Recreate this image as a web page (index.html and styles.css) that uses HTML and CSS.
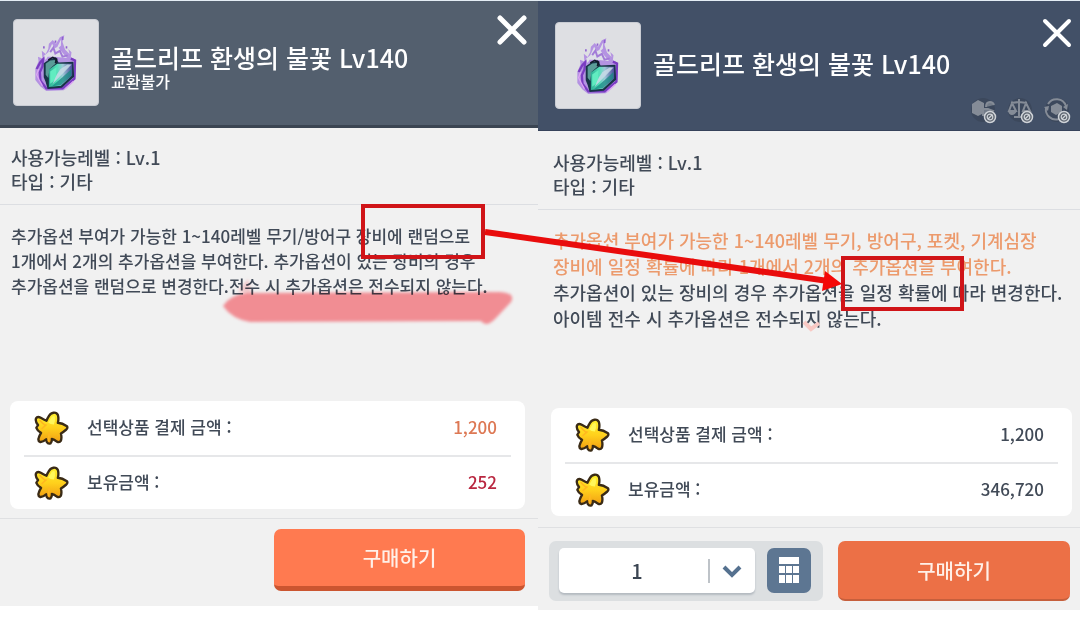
FILE: index.html
```
<!DOCTYPE html>
<html lang="ko">
<head>
  <meta charset="UTF-8" />
  <meta name="viewport" content="width=device-width, initial-scale=1" />
  <title>골드리프 환생의 불꽃 Lv140</title>
  <link rel="stylesheet" href="styles.css">
</head>
<body>

  <!-- 공용 아이콘 -->
  <svg class="sprites" aria-hidden="true">
    <defs>
      <linearGradient id="starFill" x1="0" y1="0" x2="0" y2="1">
        <stop offset="0" stop-color="#fff22e" />
        <stop offset="0.5" stop-color="#ffd01c" />
        <stop offset="1" stop-color="#f09a12" />
      </linearGradient>
      <linearGradient id="gemFill" x1="0" y1="0" x2="1" y2="0">
        <stop offset="0" stop-color="#2fae94" />
        <stop offset="0.35" stop-color="#53dfb8" />
        <stop offset="0.6" stop-color="#9fc9d8" />
        <stop offset="1" stop-color="#4a4b9a" />
      </linearGradient>
      <filter id="soft" x="-10%" y="-40%" width="120%" height="180%">
        <feGaussianBlur stdDeviation="1.6" />
      </filter>
    </defs>
    <symbol id="star" viewBox="0 0 104 104">
      <path d="M45 14C50 4 66 1 71 12Q74 23 71 35Q84 36 98 45Q101 50 96 55Q88 62 80 67Q83 79 80 88Q76 95 68 91Q60 85 53 83Q54 91 49 96Q42 99 38 92L36 84Q27 93 18 92Q11 89 14 80Q16 73 21 65Q10 59 7 50Q9 46 12 42Q3 32 6 22Q10 15 20 20Q30 26 37 29Q40 22 45 14Z" fill="url(#starFill)" stroke="#3a2b16" stroke-width="7" stroke-linejoin="round" />
      <path d="M48 25Q54 12 62 16Q64 30 59 40Q48 40 42 34Z" fill="#fff75a" />
      <path d="M18 28Q28 40 35 42L24 52M45 66L43 88" fill="none" stroke="#ffb820" stroke-width="5" stroke-linecap="round" />
    </symbol>
    <symbol id="flame" viewBox="0 0 260 260">
      <path d="M66 150L76 126L74 112L88 118L86 94L98 104L106 88L108 72L120 60L130 72L134 66L142 52L156 46L150 66L158 90L172 104L168 88L178 98L176 114L188 120L192 140L190 182L172 200L154 216L100 218L82 204L66 184Z" fill="#b493e2" />
      <path d="M106 98L118 72L126 86L134 82L146 58L145 78L138 84L152 102L164 116L124 112L104 112L98 122L92 110Z" fill="#dedfe8" />
      <path d="M112 98L122 84L128 102L142 94L150 112L166 108" fill="none" stroke="#a27bd8" stroke-width="6" />
      <path d="M70 150L82 128L90 120L88 142L80 160L82 186L100 210L150 210L187 180L189 124L176 118" fill="none" stroke="#7a3cc2" stroke-width="7" />
      <path d="M76 150L70 168L78 184L88 202M184 188L158 212" fill="none" stroke="#dda4f4" stroke-width="4" />
      <path d="M92 132L110 120L130 114L138 130L184 128L186 174L148 208L104 212L98 190L92 176Z" fill="#173447" />
      <path d="M98 134L112 124L126 122L130 132L110 150L106 178L98 168Z" fill="#5a9c98" />
      <path d="M108 152L134 134L180 134L180 170L145 202L108 206Z" fill="url(#gemFill)" />
      <path d="M112 158L132 144L130 182L112 196Z" fill="#61ecc0" />
      <path d="M144 150L166 136L178 136L120 196L132 168Z" fill="#c9dbe8" opacity=".85" />
      <path d="M150 176L178 150L178 170L146 200L116 204Z" fill="#178b83" opacity=".75" />
      <path d="M106 122L120 114L132 120L128 132" fill="none" stroke="#111827" stroke-width="5" />
      <path d="M126 62h5v7h-5zM90 80h5v7h-5zM160 80h5v7h-5zM148 50h5v10h-5z" fill="#8e5fd0" />
    </symbol>
    <symbol id="ban" viewBox="0 0 14 14">
      <circle cx="7" cy="7" r="5.5" fill="#59616c" stroke="#cfd3d8" stroke-width="1.5" />
      <circle cx="7" cy="7" r="2.8" fill="none" stroke="#cfd3d8" stroke-width="1.2" />
      <path d="M5 9L9 5" stroke="#cfd3d8" stroke-width="1.3" />
    </symbol>
  </svg>

  <main class="compare">

    <section class="panel before">
      <header class="panel-header">
        <div class="thumb"><svg><use href="#flame" /></svg></div>
        <div class="heading">
          <h2>골드리프 환생의 불꽃 Lv140</h2>
          <p>교환불가</p>
        </div>
        <div class="side">
          <button type="button" class="close" aria-label="닫기">
            <svg viewBox="0 0 30 30"><path d="M3 3L27 27M27 3L3 27" stroke-width="5" /></svg>
          </button>
        </div>
      </header>
      <div class="info">
        <p>사용가능레벨 : Lv.1</p>
        <p>타입 : 기타</p>
      </div>
      <div class="desc">
        <p>추가옵션 부여가 가능한 1~140레벨 무기/방어구 장비에 랜덤으로<br>1개에서 2개의 추가옵션을 부여한다. 추가옵션이 있는 장비의 경우<br>추가옵션을 랜덤으로 변경한다.전수 시 추가옵션은 전수되지 않는다.</p>
      </div>
      <dl class="price">
        <div class="price-row">
          <svg><use href="#star" /></svg>
          <dt>선택상품 결제 금액 :</dt>
          <dd class="orange">1,200</dd>
        </div>
        <div class="price-row">
          <svg><use href="#star" /></svg>
          <dt>보유금액 :</dt>
          <dd class="red">252</dd>
        </div>
      </dl>
      <footer class="actions">
        <button type="button" class="buy">구매하기</button>
      </footer>
    </section>

    <section class="panel after">
      <header class="panel-header">
        <div class="thumb"><svg><use href="#flame" /></svg></div>
        <div class="heading">
          <h2>골드리프 환생의 불꽃 Lv140</h2>
        </div>
        <div class="side">
          <button type="button" class="close" aria-label="닫기">
            <svg viewBox="0 0 30 30"><path d="M3 3L27 27M27 3L3 27" stroke-width="4" /></svg>
          </button>
          <div class="limits">
            <svg viewBox="0 0 28 28" role="img" aria-label="교환 불가">
              <circle cx="13" cy="13" r="12" fill="#3c485c" />
              <path d="M2 7L8 3L14 6V16L8 19L2 16Z" fill="#858c97" />
              <path d="M13 12H18L23 14L20 18H13ZM16 10Q16 5 20 5Q23 5 24 8" fill="#737c89" stroke="#858c97" stroke-width="2" />
              <use href="#ban" x="13" y="13" width="14" height="14" />
            </svg>
            <svg viewBox="0 0 28 28" role="img" aria-label="경매 불가">
              <circle cx="13" cy="13" r="12" fill="#3c485c" />
              <path d="M12 2V19M7 20H16M4 6L12 5L20 6M5 6L2 14H9ZM19 6L16 14H23Z" fill="none" stroke="#858c97" stroke-width="2" />
              <path d="M1 14H10Q8 18 5 18Q2 18 1 14ZM15 14H24Q22 18 19 18Z" fill="#858c97" />
              <use href="#ban" x="13" y="13" width="14" height="14" />
            </svg>
            <svg viewBox="0 0 28 28" role="img" aria-label="이동 불가">
              <circle cx="13" cy="13" r="12" fill="#3c485c" />
              <path d="M4 7A10 10 0 0 1 22 9M2 11A10 10 0 0 0 15 22" fill="none" stroke="#858c97" stroke-width="2" />
              <path d="M0 10L5 9L4 14ZM24 7L23 13L19 10Z" fill="#858c97" />
              <path d="M7 9L13 6L18 9V15L12 18L7 15Z" fill="#858c97" />
              <use href="#ban" x="13" y="13" width="14" height="14" />
            </svg>
          </div>
        </div>
      </header>
      <div class="info">
        <p>사용가능레벨 : Lv.1</p>
        <p>타입 : 기타</p>
      </div>
      <div class="desc">
        <p class="changed">추가옵션 부여가 가능한 1~140레벨 무기, 방어구, 포켓, 기계심장<br>장비에 일정 확률에 따라 1개에서 2개의 추가옵션을 부여한다.</p>
        <p>추가옵션이 있는 장비의 경우 추가옵션을 일정 확률에 따라 변경한다.<br>아이템 전수 시 추가옵션은 전수되지 않는다.</p>
      </div>
      <dl class="price">
        <div class="price-row">
          <svg><use href="#star" /></svg>
          <dt>선택상품 결제 금액 :</dt>
          <dd>1,200</dd>
        </div>
        <div class="price-row">
          <svg><use href="#star" /></svg>
          <dt>보유금액 :</dt>
          <dd>346,720</dd>
        </div>
      </dl>
      <footer class="actions">
        <div class="quantity">
          <div class="select-wrap">
            <select aria-label="수량">
              <option>1</option>
              <option>2</option>
              <option>3</option>
            </select>
            <svg class="arrow" viewBox="0 0 36 24" aria-hidden="true">
              <path d="M1 0V24" stroke="#a9afb6" stroke-width="1.5" />
              <path d="M16 8L24 16L32 8" fill="none" stroke="#55718f" stroke-width="4" />
            </svg>
          </div>
          <button type="button" class="calc" aria-label="계산기">
            <svg viewBox="0 0 20 26">
              <path d="M0 0H20V7H0ZM0 9H6V16H0ZM7 9H13V16H7ZM14 9H20V16H14ZM0 18H6V26H0ZM7 18H13V26H7ZM14 18H20V26H14Z" fill="#fff" />
            </svg>
          </button>
        </div>
        <button type="button" class="buy">구매하기</button>
      </footer>
    </section>

    <!-- 변경점 표시 -->
    <svg class="marks" viewBox="0 0 1080 622" aria-hidden="true">
      <path class="marker" d="M223 306Q230 295 246 293L500 292Q516 293 511 302L495 319Q486 328 481 321L250 322Q232 319 223 306Z" filter="url(#soft)" />
      <path class="marker" d="M238 291L248 279L252 294Z" filter="url(#soft)" opacity=".4" />
      <path d="M804 322L811 329L819 323" fill="none" stroke="#f8c9c4" stroke-width="4" />
      <rect class="box" x="363" y="206" width="120" height="51" />
      <rect class="box" x="843" y="258" width="119" height="51" />
      <path d="M485 232L828 281" stroke="#e90c0c" stroke-width="6" />
      <path d="M825 271L842 284L822 291Z" fill="#f40808" />
    </svg>
  </main>

</body>
</html>
```
FILE: styles.css
```
* {
  box-sizing: border-box;
}
body {
  margin: 0;
  background: #fff;
  color: #414a57;
  font-family: "Noto Sans CJK KR", sans-serif;
  font-size: 18px;
  font-weight: 500;
}
h2, p, dl, dd {
  margin: 0;
}
button, select {
  font: inherit;
  border: none;
  cursor: pointer;
}
.sprites {
  position: absolute;
  width: 0;
  height: 0;
}
.compare {
  position: relative;
  display: grid;
  grid-template-columns: minmax(0, 538fr) minmax(0, 542fr);
  align-items: start;
  border-top: 1px solid #e4edf5;
}
.panel {
  background: #f1f1f1;
}

/* 상단 */
.panel-header {
  display: flex;
  align-items: flex-start;
  gap: 12px;
  color: #fff;
}
.before .panel-header {
  padding: 18px 11px 19px 13px;
  background: #535f6e;
  border-bottom: 3px solid #3b4552;
}
.after .panel-header {
  padding: 21px 8px 21px 17px;
  background: #425067;
  border-bottom: 1px solid #36425a;
}
.thumb {
  width: 86px;
  height: 87px;
  flex-shrink: 0;
  background: #dedfe3;
  border: 1px solid #c9ccd3;
  border-radius: 4px;
}
.thumb svg {
  display: block;
  width: 100%;
  height: 100%;
}
.heading {
  flex: 1;
  min-width: 0;
  padding-top: 24px;
}
.heading h2 {
  font-size: 25px;
  line-height: 28px;
  font-weight: 500;
  white-space: nowrap;
}
.after .heading {
  padding-top: 27px;
}
.heading p {
  font-size: 16px;
  line-height: 20px;
}
.side {
  display: flex;
  flex-direction: column;
  align-items: flex-end;
  align-self: stretch;
  justify-content: space-between;
}
.close {
  width: 30px;
  height: 30px;
  padding: 0;
  background: none;
  margin-top: -4px;
}
.close svg {
  display: block;
  stroke: #fff;
  stroke-linecap: round;
}
.limits {
  display: flex;
  gap: 9px;
  margin-bottom: -16px;
}
.limits svg {
  width: 28px;
  height: 28px;
}

/* 설명 */
.info {
  padding: 17px 11px 11px;
  line-height: 24px;
  border-bottom: 1px solid #dcdee2;
}
.after .info {
  padding: 19px 15px 11px;
}
.desc {
  min-height: 196px;
  padding: 18px 11px;
  font-size: 17px;
  line-height: 25px;
  white-space: nowrap;
}
.after .desc {
  min-height: 198px;
  padding: 17px 15px;
  font-size: 18px;
  line-height: 26px;
}
.changed {
  color: #ec9a6c;
}

/* 금액 */
.price {
  margin: 0 13px 9px 10px;
  padding: 0 14px;
  background: #fff;
  border-radius: 8px;
  font-size: 17px;
}
.after .price {
  margin: 0 8px 11px 13px;
}
.price-row {
  display: flex;
  align-items: center;
  height: 54px;
  padding: 0 14px 0 10px;
}
.price-row + .price-row {
  border-top: 2px solid #e6e7e9;
}
.price-row svg {
  width: 35px;
  height: 35px;
  margin-right: 18px;
}
.price-row dt, .price-row dd {
  padding-bottom: 3px;
}
.price-row dd {
  margin-left: auto;
}
.orange {
  color: #dd7854;
}
.red {
  color: #b92740;
}

/* 하단 */
.actions {
  display: flex;
  justify-content: flex-end;
  gap: 15px;
  padding: 10px 13px 15px;
  border-top: 1px solid #dfe0e2;
}
.after .actions {
  padding: 13px 10px 9px 11px;
}
.buy {
  width: 251px;
  height: 62px;
  background: #ff7a50;
  color: #fff0e8;
  font-size: 20px;
  border-bottom: 5px solid #cb5530;
  border-radius: 7px;
}
.after .buy {
  flex: 1;
  height: 60px;
  background: #ec7046;
  border-bottom: 2px solid #c65f3c;
}
.quantity {
  display: flex;
  align-items: center;
  gap: 12px;
  width: 274px;
  padding: 6px 12px 8px 10px;
  background: #dcdfe1;
  border-radius: 7px;
}
.select-wrap {
  position: relative;
  flex: 1;
}
.select-wrap select {
  appearance: none;
  display: block;
  width: 100%;
  height: 45px;
  padding: 0 40px 0 0;
  background: #fff;
  color: #3b4552;
  font-size: 20px;
  text-align: center;
  text-align-last: center;
  border-radius: 5px;
  box-shadow: 0 2px 2px #b4bac0;
}
.arrow {
  position: absolute;
  top: 11px;
  right: 11px;
  width: 36px;
  height: 24px;
  pointer-events: none;
}
.calc {
  display: flex;
  align-items: center;
  justify-content: center;
  width: 44px;
  height: 45px;
  padding: 0;
  background: #5d7692;
  border-radius: 7px;
}
.calc svg {
  width: 20px;
  height: 26px;
}

/* 표시선 */
.marks {
  position: absolute;
  top: -1px;
  left: 0;
  width: 100%;
  pointer-events: none;
}
.marker {
  fill: #ff959c;
  mix-blend-mode: multiply;
}
.box {
  fill: none;
  stroke: #d01418;
  stroke-width: 4;
}
```
